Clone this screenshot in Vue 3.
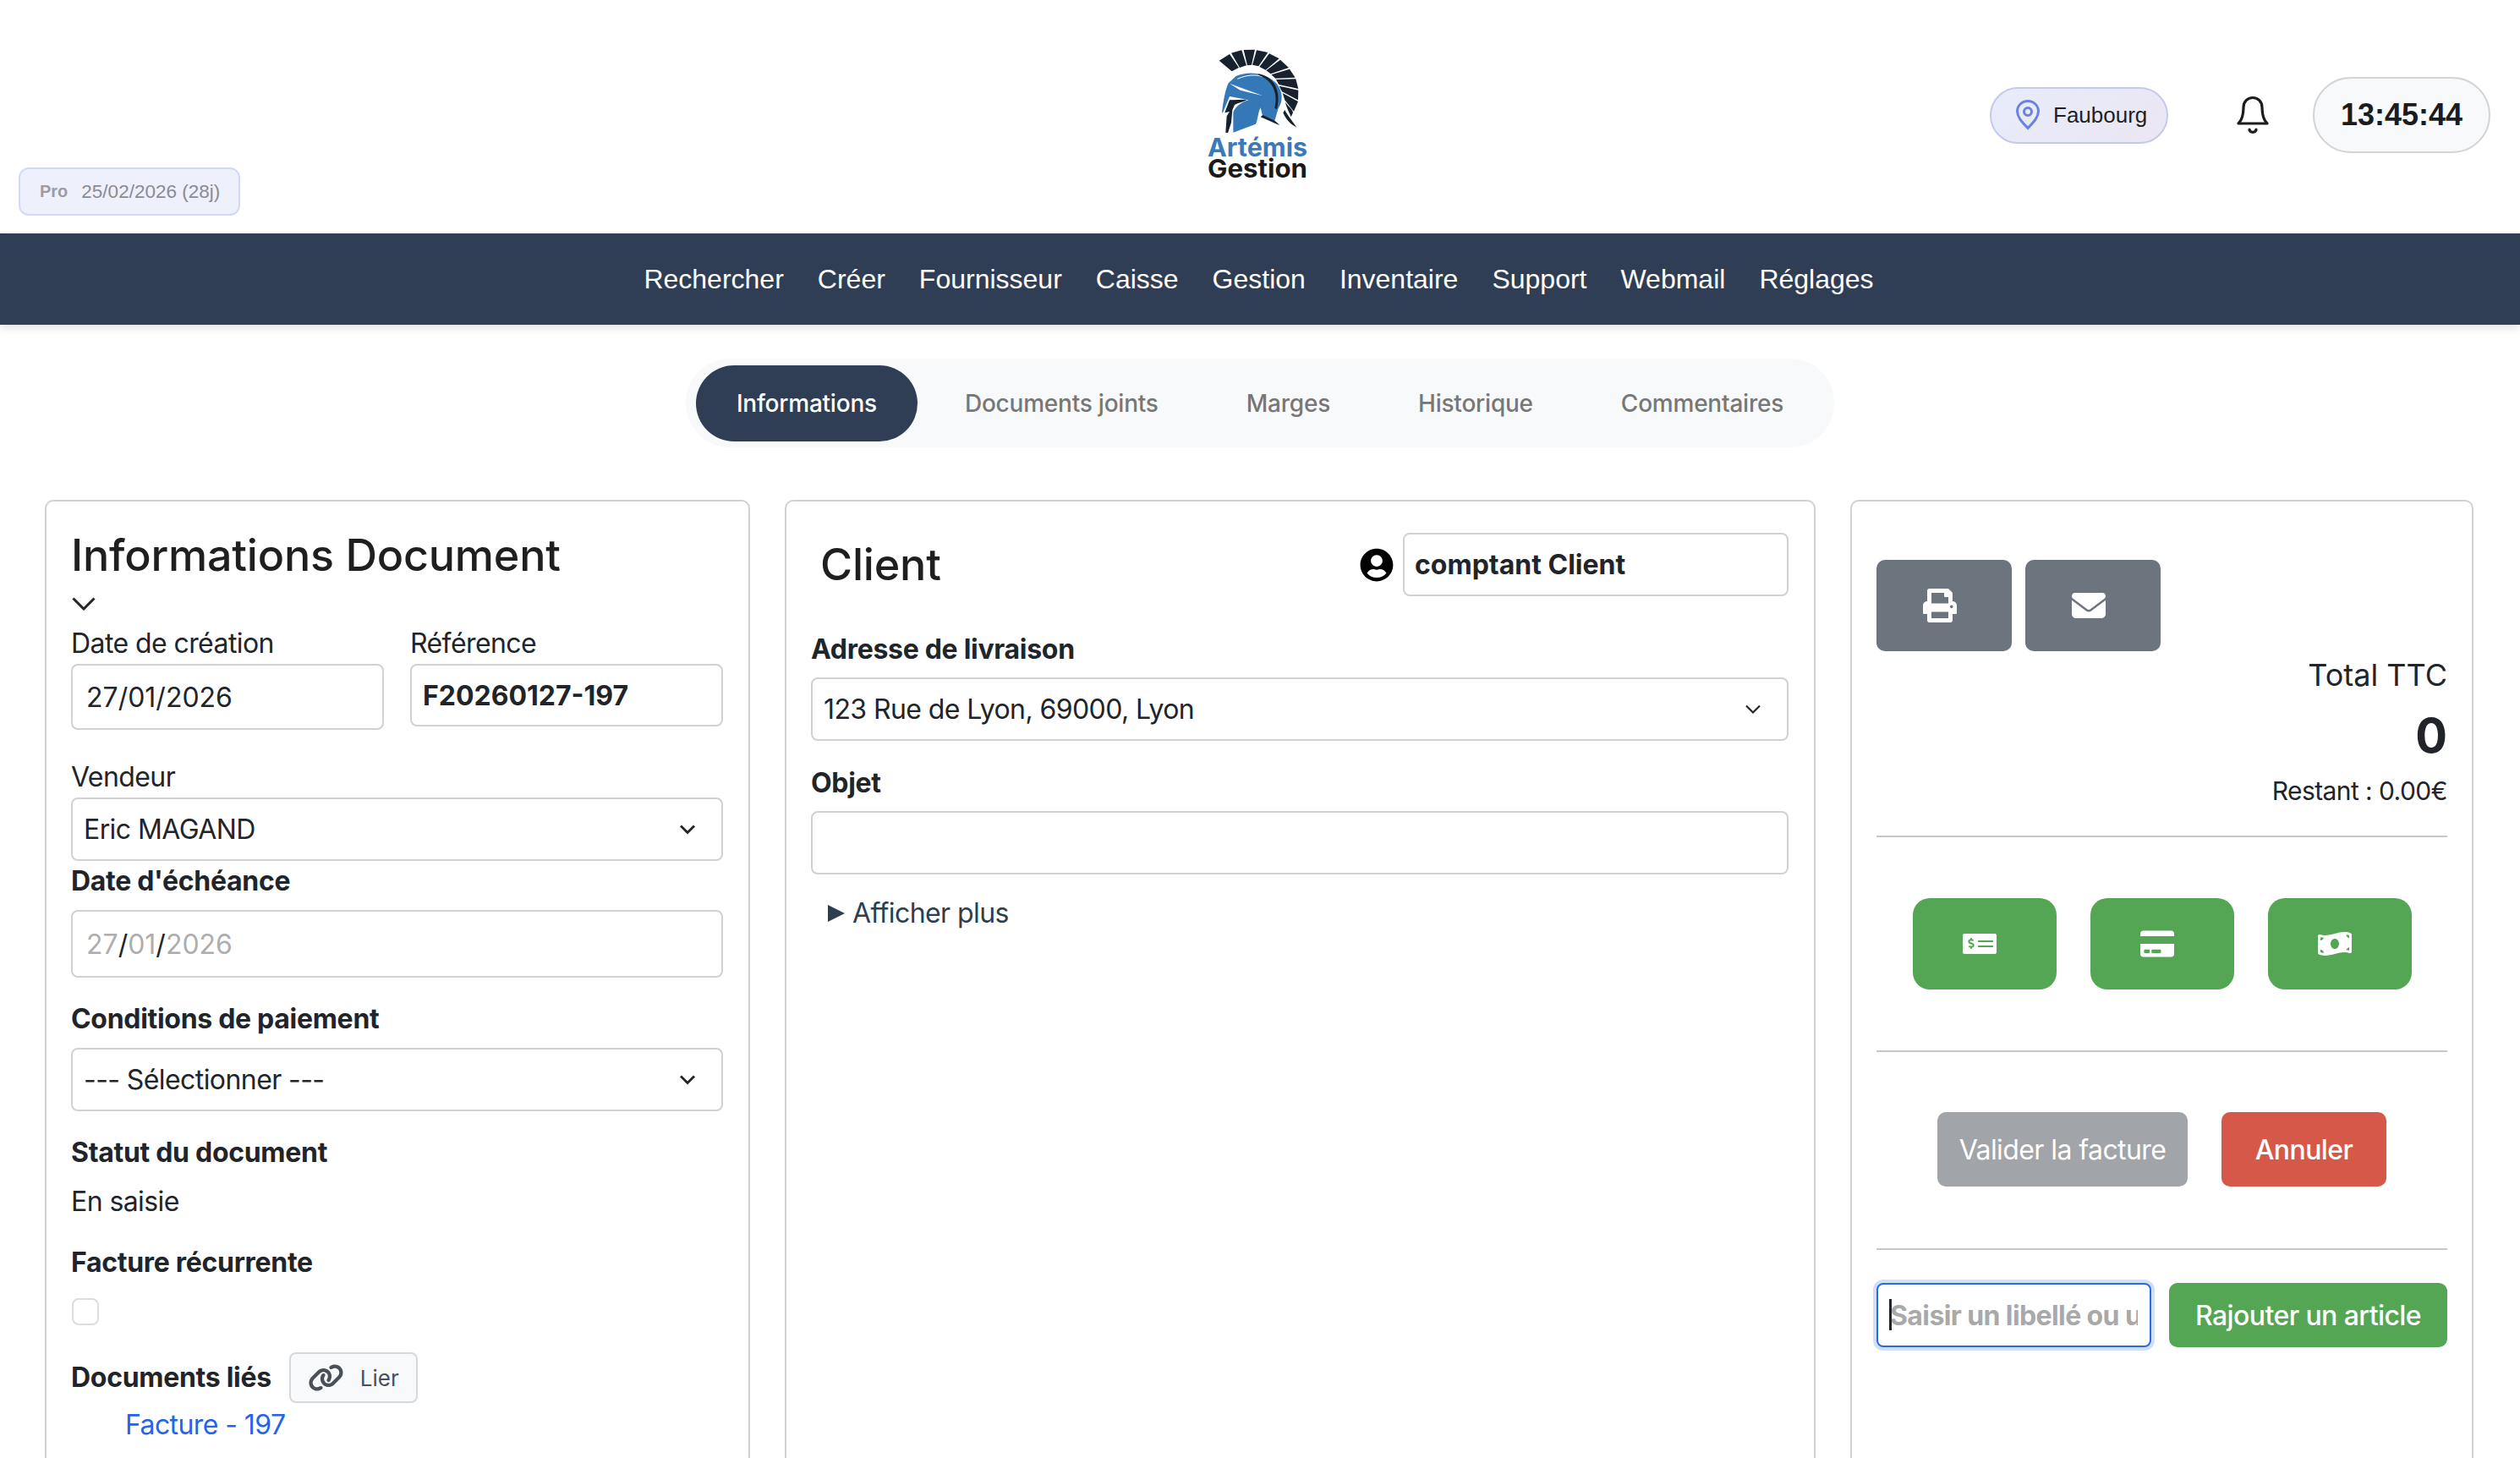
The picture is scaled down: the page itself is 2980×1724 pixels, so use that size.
<template>
  <div class="page">
    <header class="top">
      <div class="plan"><span class="plan-name">Pro</span><span class="plan-date">25/02/2026 (28j)</span></div>
      <div class="logo">
        <svg class="logo-img" viewBox="0 0 120 166">
          <g transform="translate(2 -6) scale(.3333)">
            <g fill="#18222e">
              <path d="M35 65 72 42 105 90 80 103z" />
              <path d="M78 38 115 28 132 82 108 90z" />
              <path d="M122 27 162 26 150 80 135 82z" />
              <path d="M168 28 208 36 175 85 153 80z" />
              <path d="M213 40 248 58 200 98 178 87z" />
              <path d="M252 62 282 90 218 112 202 100z" />
              <path d="M285 95 305 125 235 128 220 115z" />
              <path d="M307 130 316 165 247 150 237 132z" />
              <path d="M316 170 315 205 258 175 248 155z" />
              <path d="M315 210 300 245 268 205 260 180z" />
              <path d="M270 212C285 232 296 240 297 250L290 265C283 245 275 235 270 212z" />
              <path d="M268 240C275 255 295 280 310 302C285 290 270 270 262 250z" />
            </g>
            <path fill="#3478b8" d="M68 145 95 120C140 100 205 108 240 148C262 178 262 210 245 235L232 278 250 292 190 265 182 232C172 250 172 280 165 290L85 320 85 248C95 225 120 210 140 205L72 192 48 250 45 250C50 210 55 175 68 145z" />
            <path fill="#fff" d="M72 146 190 190 110 170z" />
            <path fill="none" stroke="#fff" stroke-width="3" d="M100 130C130 116 165 113 190 122" />
            <path fill="#18222e" d="M175 112C225 122 258 165 240 238L232 234C245 180 225 135 175 116z" />
            <path fill="#18222e" d="M72 205 135 203C120 212 100 215 90 222L82 240 78 285 66 322 58 320 62 262 72 246 55 250z" />
            <path fill="#18222e" d="M182 265 250 295 232 278 190 258z" />
          </g>
          <text class="logo-txt" x="0" y="129" fill="#3a7ab8" textLength="118" lengthAdjust="spacingAndGlyphs">Artémis</text>
          <text class="logo-txt" x="0" y="154" fill="#1a1a1a" textLength="118" lengthAdjust="spacingAndGlyphs">Gestion</text>
        </svg>
      </div>
      <div class="top-right">
        <div class="site">
          <svg class="pin" viewBox="0 0 30 36" fill="none" stroke="#6b82e0" stroke-width="3">
            <path d="M15 33.5C9 27 2.5 21 2.5 13.5a12.5 12 0 0 1 25 0C27.5 21 21 27 15 33.5z" />
            <circle cx="15" cy="14" r="4.5" />
          </svg>
          <span>Faubourg</span>
        </div>
        <svg class="bell" viewBox="0 0 40 46" fill="none" stroke="#1c1c1c" stroke-width="3.2" stroke-linejoin="round" stroke-linecap="round">
          <path d="M3 33C8 28 9 22 9 14C9 7 14 2.5 20 2.5C26 2.5 31 7 31 14C31 22 32 28 37 33z" />
          <path d="M16 40C16 44.5 24 44.5 24 40" />
        </svg>
        <div class="clock">13:45:44</div>
      </div>
    </header>

    <nav class="menu">
      <a v-for="item in menu" :key="item">{{ item }}</a>
    </nav>

    <div class="tabs-wrap">
      <div class="tabs">
        <div v-for="(tab, i) in tabs" :key="tab" class="tab" :class="{ active: i === 0 }">{{ tab }}</div>
      </div>
    </div>

    <main class="cols">
      <section class="card doc">
        <h2 class="doc-title">Informations Document</h2>
        <div class="collapse">
          <svg class="chev-big" viewBox="0 0 28 16" fill="none" stroke="#212529" stroke-width="3">
            <path d="M1.5 1.5 14 14 26.5 1.5" />
          </svg>
        </div>
        <div class="pair">
          <div class="pair-col">
            <div class="lab">Date de création</div>
            <div class="box date-box">27/01/2026</div>
          </div>
          <div class="pair-col">
            <div class="lab">Référence</div>
            <div class="box ref-box">F20260127-197</div>
          </div>
        </div>
        <div class="lab vendeur-lab">Vendeur</div>
        <div class="box sel">
          <span>Eric MAGAND</span>
          <svg class="chev" viewBox="0 0 20 14" fill="none" stroke="#212529" stroke-width="2.8"><path d="M2 2.5 10 10.5 18 2.5" /></svg>
        </div>
        <div class="lab strong">Date d'échéance</div>
        <div class="box due-box">
          <span class="muted">27</span>/<span class="muted">01</span>/<span class="muted">2026</span>
        </div>
        <div class="lab strong pay-lab">Conditions de paiement</div>
        <div class="box sel">
          <span>--- Sélectionner ---</span>
          <svg class="chev" viewBox="0 0 20 14" fill="none" stroke="#212529" stroke-width="2.8"><path d="M2 2.5 10 10.5 18 2.5" /></svg>
        </div>
        <div class="lab strong status-lab">Statut du document</div>
        <div class="lab status-val">En saisie</div>
        <div class="lab strong recur-lab">Facture récurrente</div>
        <div class="check"></div>
        <div class="linked">
          <span class="lab strong">Documents liés</span>
          <div class="link-btn">
            <svg class="link-ico" viewBox="0 0 640 512" fill="#4a5058">
              <path d="M579.8 267.7c56.5-56.5 56.5-148 0-204.5c-50-50-128.8-56.5-186.3-15.4l-1.6 1.1c-14.4 10.3-17.7 30.3-7.4 44.6s30.3 17.7 44.6 7.4l1.6-1.1c32.1-22.9 76-19.3 103.8 8.6c31.5 31.5 31.5 82.5 0 114L422.3 334.8c-31.5 31.5-82.5 31.5-114 0c-27.9-27.9-31.5-71.8-8.6-103.8l1.1-1.6c10.3-14.4 6.9-34.4-7.4-44.6s-34.4-6.9-44.6 7.4l-1.1 1.6C206.5 251.2 213 330 263 380c56.5 56.5 148 56.5 204.5 0L579.8 267.7zM60.2 244.3c-56.5 56.5-56.5 148 0 204.5c50 50 128.8 56.5 186.3 15.4l1.6-1.1c14.4-10.3 17.7-30.3 7.4-44.6s-30.3-17.7-44.6-7.4l-1.6 1.1c-32.1 22.9-76 19.3-103.8-8.6C74 372 74 321 105.5 289.5L217.7 177.2c31.5-31.5 82.5-31.5 114 0c27.9 27.9 31.5 71.8 8.6 103.9l-1.1 1.6c-10.3 14.4-6.9 34.4 7.4 44.6s34.4 6.9 44.6-7.4l1.1-1.6C433.5 260.8 427 182 377 132c-56.5-56.5-148-56.5-204.5 0L60.2 244.3z" />
            </svg>
            <span>Lier</span>
          </div>
        </div>
        <a class="doc-link">Facture - 197</a>
      </section>

      <section class="card client">
        <div class="client-head">
          <h2 class="client-title">Client</h2>
          <div class="client-pick">
            <svg class="user-ico" viewBox="0 0 496 512" fill="#000">
              <path d="M248 8C111 8 0 119 0 256s111 248 248 248 248-111 248-248S385 8 248 8zm0 96c48.6 0 88 39.4 88 88s-39.4 88-88 88-88-39.4-88-88 39.4-88 88-88zm0 344c-58.7 0-111.3-26.6-146.5-68.2 18.8-35.4 55.6-59.8 98.5-59.8 2.4 0 4.8.4 7.1 1.1 13 4.2 26.6 6.9 40.9 6.9 14.3 0 28-2.7 40.9-6.9 2.3-.7 4.7-1.1 7.1-1.1 42.9 0 79.7 24.4 98.5 59.8C359.3 421.4 306.7 448 248 448z" />
            </svg>
            <div class="box client-box">comptant Client</div>
          </div>
        </div>
        <div class="lab strong addr-lab">Adresse de livraison</div>
        <div class="box sel addr-sel">
          <span>123 Rue de Lyon, 69000, Lyon</span>
          <svg class="chev" viewBox="0 0 20 14" fill="none" stroke="#212529" stroke-width="2.2"><path d="M2 2.5 10 10.5 18 2.5" /></svg>
        </div>
        <div class="lab strong obj-lab">Objet</div>
        <div class="box obj-box"></div>
        <div class="more"><span class="tri"></span>Afficher plus</div>
      </section>

      <section class="card pay">
        <div class="tools">
          <div class="tool">
            <svg class="ico" viewBox="0 0 512 512" fill="#fff">
              <path d="M448 192V77.25c0-8.49-3.37-16.62-9.37-22.63L393.37 9.37c-6-6-14.14-9.37-22.63-9.37H96C78.33 0 64 14.33 64 32v160c-35.35 0-64 28.65-64 64v112c0 8.84 7.16 16 16 16h48v96c0 17.67 14.33 32 32 32h320c17.67 0 32-14.33 32-32v-96h48c8.84 0 16-7.16 16-16V256c0-35.35-28.65-64-64-64zm-64 256H128v-96h256v96zm0-224H128V64h192v48c0 8.84 7.16 16 16 16h48v96zm48 72c-13.25 0-24-10.75-24-24 0-13.26 10.75-24 24-24s24 10.74 24 24c0 13.25-10.75 24-24 24z" />
            </svg>
          </div>
          <div class="tool">
            <svg class="ico" viewBox="0 0 512 512" fill="#fff">
              <path d="M48 64C21.5 64 0 85.5 0 112c0 15.1 7.1 29.3 19.2 38.4L236.8 313.6c11.4 8.5 27 8.5 38.4 0L492.8 150.4c12.1-9.1 19.2-23.3 19.2-38.4c0-26.5-21.5-48-48-48H48zM0 176V384c0 35.3 28.7 64 64 64H448c35.3 0 64-28.7 64-64V176L294.4 339.2c-22.8 17.1-54 17.1-76.8 0L0 176z" />
            </svg>
          </div>
        </div>
        <div class="total-lab">Total TTC</div>
        <div class="total-val">0</div>
        <div class="total-rest">Restant : 0.00€</div>
        <hr class="sep" />
        <div class="modes">
          <div class="mode">
            <svg class="ico" viewBox="0 0 640 512" fill="#fff">
              <path d="M608 64H32C14.33 64 0 78.33 0 96v320c0 17.67 14.33 32 32 32h576c17.67 0 32-14.33 32-32V96c0-17.67-14.33-32-32-32zM176 327.88V344c0 4.42-3.58 8-8 8h-16c-4.42 0-8-3.58-8-8v-16.29c-11.29-.58-22.27-4.52-31.37-11.35-3.9-2.93-4.1-8.77-.57-12.14l11.75-11.21c2.77-2.64 6.89-2.76 10.13-.73 3.87 2.42 8.26 3.72 12.82 3.72h28.11c6.5 0 11.8-5.92 11.8-13.19 0-5.95-3.61-11.19-8.77-12.73l-45-13.5c-18.59-5.58-31.58-23.42-31.58-43.39 0-24.52 19.05-44.44 42.67-45.07V152c0-4.42 3.58-8 8-8h16c4.42 0 8 3.58 8 8v16.29c11.29.58 22.27 4.51 31.37 11.35 3.9 2.93 4.1 8.77.57 12.14l-11.75 11.21c-2.77 2.64-6.89 2.76-10.13.73-3.87-2.43-8.26-3.72-12.82-3.72h-28.11c-6.5 0-11.8 5.92-11.8 13.19 0 5.95 3.61 11.19 8.77 12.73l45 13.5c18.59 5.58 31.58 23.42 31.58 43.39 0 24.53-19.05 44.44-42.67 45.07zM576 312c0 4.42-3.58 8-8 8H296c-4.42 0-8-3.58-8-8v-16c0-4.42 3.58-8 8-8h272c4.42 0 8 3.58 8 8v16zm0-96c0 4.42-3.58 8-8 8H296c-4.42 0-8-3.58-8-8v-16c0-4.42 3.58-8 8-8h272c4.42 0 8 3.58 8 8v16z" />
            </svg>
          </div>
          <div class="mode">
            <svg class="ico" viewBox="0 0 576 512" fill="#fff">
              <path d="M0 432c0 26.5 21.5 48 48 48h480c26.5 0 48-21.5 48-48V256H0v176zm192-68c0-6.6 5.4-12 12-12h136c6.6 0 12 5.4 12 12v40c0 6.6-5.4 12-12 12H204c-6.6 0-12-5.4-12-12v-40zm-128 0c0-6.6 5.4-12 12-12h72c6.6 0 12 5.4 12 12v40c0 6.6-5.4 12-12 12H76c-6.6 0-12-5.4-12-12v-40zM576 80v48H0V80c0-26.5 21.5-48 48-48h480c26.5 0 48 21.5 48 48z" />
            </svg>
          </div>
          <div class="mode">
            <svg class="ico" viewBox="0 0 640 512" fill="#fff">
              <path d="M621.16 54.46C582.37 38.19 543.55 32 504.75 32c-123.17-.01-246.33 62.34-369.5 62.34-30.89 0-61.76-3.92-92.65-13.72-3.47-1.1-6.95-1.62-10.35-1.62C15.04 79 0 92.32 0 110.81v317.26c0 12.63 7.23 24.6 18.84 29.46C57.63 473.81 96.45 480 135.25 480c123.17 0 246.34-62.35 369.51-62.35 30.89 0 61.76 3.92 92.65 13.72 3.47 1.1 6.95 1.62 10.35 1.62 17.21 0 32.25-13.32 32.25-31.81V83.93c-.01-12.64-7.24-24.6-18.85-29.47zM48 132.22c20.12 5.04 41.12 7.57 62.72 8.93C104.84 170.54 79 192.69 48 192.69v-60.47zm0 285v-47.78c34.37 0 62.18 27.27 63.71 61.4-22.53-1.81-43.59-6.31-63.71-13.62zM320 352c-44.19 0-80-42.99-80-96 0-53.02 35.82-96 80-96s80 42.98 80 96c0 53.03-35.83 96-80 96zm272 27.78c-17.52-4.39-35.71-6.85-54.32-8.44 5.87-26.08 27.5-45.88 54.32-49.28v57.72zm0-236.11c-30.89-3.91-54.86-29.7-55.81-61.55 19.54 2.17 38.09 6.23 55.81 12.66v48.89z" />
            </svg>
          </div>
        </div>
        <hr class="sep" />
        <div class="actions">
          <button class="act valid">Valider la facture</button>
          <button class="act cancel">Annuler</button>
        </div>
        <hr class="sep" />
        <div class="add-row">
          <div class="add-field">
            <input class="add-input" placeholder="Saisir un libellé ou un article" />
            <span class="caret"></span>
          </div>
          <button class="add-btn">Rajouter un article</button>
        </div>
      </section>
    </main>
  </div>
</template>

<script setup>
const menu = ['Rechercher', 'Créer', 'Fournisseur', 'Caisse', 'Gestion', 'Inventaire', 'Support', 'Webmail', 'Réglages']
const tabs = ['Informations', 'Documents joints', 'Marges', 'Historique', 'Commentaires']
</script>

<style>
html, body { margin: 0; background: #fff; }
</style>

<style scoped>
.page {
  height: 1724px;
  overflow: hidden;
  font-family: Inter, "Liberation Sans", sans-serif;
  font-size: 32px;
  letter-spacing: -0.58px;
  color: #212529;
  background: #fff;
}

/* header */
.top {
  height: 276px;
  display: grid;
  grid-template-columns: 1fr auto 1fr;
}
.plan {
  align-self: end;
  justify-self: start;
  margin: 0 0 21px 22px;
  height: 57px;
  width: 262px;
  box-sizing: border-box;
  display: flex;
  align-items: center;
  gap: 16px;
  padding-left: 23px;
  background: #eef0fb;
  border: 2px solid #d3d9f5;
  border-radius: 12px;
  color: #8b8b93;
  font-family: "Liberation Sans", sans-serif;
  font-size: 22.5px;
  letter-spacing: 0;
}
.plan-name { font-weight: 700; font-size: 20px; color: #9c9ca8; }
.logo { padding-top: 56px; margin-right: 4px; }
.logo-img { display: block; width: 120px; height: 166px; }
.logo-txt { font-weight: 700; font-size: 30px; letter-spacing: 0; }
.top-right {
  display: flex;
  align-items: center;
  justify-content: flex-end;
  padding: 0 35px 4px 0;
}
.site {
  width: 211px;
  height: 67px;
  box-sizing: border-box;
  display: flex;
  align-items: center;
  gap: 15px;
  padding-left: 28px;
  border: 2px solid #c3c9f0;
  border-radius: 34px;
  background: linear-gradient(135deg, #e8ecfb, #ebe6f2);
  font-family: "Liberation Sans", sans-serif;
  font-size: 26px;
  letter-spacing: 0;
  color: #1f1f1f;
}
.pin { width: 30px; height: 36px; }
.bell { width: 40px; height: 46px; margin: 0 51px 0 80px; }
.clock {
  width: 210px;
  height: 90px;
  box-sizing: border-box;
  display: flex;
  align-items: center;
  justify-content: center;
  border: 2px solid #d5d5d5;
  border-radius: 45px;
  background: #f8f9fb;
  font-family: "Liberation Sans", sans-serif;
  font-weight: 700;
  font-size: 36px;
  letter-spacing: 0;
  color: #1c1c1c;
}

/* menu */
.menu {
  height: 108px;
  display: flex;
  align-items: center;
  justify-content: center;
  gap: 40px;
  padding-right: 3px;
  background: #2f3e54;
  box-shadow: 0 4px 10px rgba(0, 0, 0, 0.12);
  color: #fff;
  font-family: "Liberation Sans", sans-serif;
  font-size: 32px;
  letter-spacing: 0;
}

/* tabs */
.tabs-wrap {
  display: flex;
  justify-content: center;
  padding: 40px 0 0;
  height: 207px;
  box-sizing: border-box;
}
.tabs {
  height: 105px;
  box-sizing: border-box;
  display: flex;
  gap: 8px;
  padding: 8px 12px;
  border-radius: 52px;
  background: #f8f9fa;
  font-weight: 500;
  font-size: 28px;
  letter-spacing: -0.22px;
  color: #777;
}
.tab {
  height: 90px;
  display: flex;
  align-items: center;
  padding: 0 48px;
  border-radius: 45px;
}
.tab.active { background: #2f3e54; color: #fff; }

/* columns */
.cols {
  display: grid;
  grid-template-columns: 834px 1219px 737px;
  gap: 41px;
  padding-left: 53px;
}
.card {
  height: 1400px;
  box-sizing: border-box;
  border: 2px solid #d0d1d3;
  border-radius: 10px;
  padding: 30px 30px 30px 29px;
}
.lab { height: 48px; line-height: 48px; }
.strong { font-weight: 700; letter-spacing: -0.3px; }
.box {
  box-sizing: border-box;
  border: 2px solid #d0d1d3;
  border-radius: 8px;
  background: #fff;
  display: flex;
  align-items: center;
}

.doc-title { margin: 0; font-weight: 500; font-size: 52px; line-height: 68px; letter-spacing: -0.2px; color: #1f1f1f; }
.collapse { height: 46px; display: flex; align-items: center; }
.chev-big { width: 28px; height: 16px; margin-left: 1px; }
.pair { display: flex; gap: 31px; align-items: flex-start; margin-bottom: 32px; }
.pair-col { width: 370px; }
.date-box { height: 78px; padding-left: 16px; letter-spacing: 0; }
.ref-box { height: 74px; padding-left: 13px; font-weight: 700; letter-spacing: 0; }
.sel { height: 75px; padding: 0 30px 0 13px; justify-content: space-between; }
.chev { width: 20px; height: 14px; }
.due-box { height: 80px; padding-left: 16px; margin-top: 10px; letter-spacing: 0; }
.muted { color: #aeaeae; }
.pay-lab { margin-top: 25px; margin-bottom: 10px; }
.status-lab { margin-top: 25px; }
.status-val { margin-top: 10px; }
.recur-lab { margin-top: 24px; }
.check {
  width: 32px;
  height: 32px;
  box-sizing: border-box;
  margin: 18px 0 0 1px;
  border: 2px solid #dcdde0;
  border-radius: 8px;
}
.linked { display: flex; align-items: center; gap: 21px; margin-top: 32px; }
.link-btn {
  width: 152px;
  height: 60px;
  box-sizing: border-box;
  display: flex;
  align-items: center;
  gap: 19px;
  padding-left: 20px;
  border: 2px solid #d7d8da;
  border-radius: 8px;
  background: #f8f9fa;
  font-size: 26px;
  letter-spacing: 0;
  color: #4a5058;
}
.link-ico { width: 43px; height: 34px; }
.doc-link { display: block; margin: 2px 0 0 64px; line-height: 48px; color: #2563eb; }

.client-head { display: flex; justify-content: space-between; align-items: center; margin-bottom: 39px; }
.client-title { margin: 7px 0 0 11px; font-weight: 500; font-size: 52px; line-height: 68px; letter-spacing: -0.2px; color: #1f1f1f; }
.client-pick { display: flex; align-items: center; gap: 11px; margin-top: 7px; }
.user-ico { width: 40px; height: 40px; }
.client-box { width: 456px; height: 75px; padding-left: 12px; font-weight: 700; letter-spacing: 0; }
.addr-lab { margin-bottom: 9px; }
.addr-sel { padding-right: 30px; }
.obj-lab { margin-top: 26px; margin-bottom: 9px; }
.obj-box { height: 75px; }
.more { display: flex; align-items: center; margin: 22px 0 0 20px; line-height: 48px; color: #2c3e50; }
.tri {
  width: 0;
  height: 0;
  margin-right: 9px;
  border-left: 20px solid #2c3e50;
  border-top: 10px solid transparent;
  border-bottom: 10px solid transparent;
}

.pay { padding-right: 29px; }
.tools { display: flex; gap: 16px; margin-top: 39px; }
.tool {
  width: 160px;
  height: 108px;
  display: flex;
  align-items: center;
  padding-left: 55px;
  box-sizing: border-box;
  border-radius: 10px;
  background: #6c757d;
}
.ico { width: 40px; height: 40px; }
.total-lab { text-align: right; font-size: 36px; line-height: 56px; letter-spacing: 0; }
.total-val { text-align: right; font-size: 56px; font-weight: 700; line-height: 72px; letter-spacing: 0; margin-top: 8px; }
.total-rest { text-align: right; font-size: 30px; line-height: 46px; margin-top: 6px; }
.sep { margin: 0; border: 0; border-top: 2px solid #c6c7c9; }
.total-rest + .sep { margin-top: 30px; }
.modes { display: flex; justify-content: center; gap: 40px; padding: 72px 0; }
.mode {
  width: 170px;
  height: 108px;
  display: flex;
  align-items: center;
  justify-content: center;
  border-radius: 20px;
  background: #54a655;
}
.mode .ico { margin-left: -12px; }
.actions { display: flex; justify-content: center; gap: 40px; padding: 71px 0 73px; }
.act {
  height: 88px;
  border: 0;
  border-radius: 10px;
  color: #fff;
  font-family: inherit;
  font-weight: 500;
  font-size: 32px;
  letter-spacing: -0.58px;
}
.valid { width: 296px; background: #a1a4a8; font-weight: 400; }
.cancel { width: 195px; background: #d65848; }
.add-row { display: flex; justify-content: space-between; margin-top: 39px; }
.add-field { position: relative; }
.add-input {
  display: block;
  width: 325px;
  height: 76px;
  box-sizing: border-box;
  padding: 0 14px;
  border: 2px solid #2b6be0;
  border-radius: 8px;
  box-shadow: 0 0 0 4px #d0e0fc;
  outline: none;
  font-family: inherit;
  font-weight: 700;
  font-size: 32px;
  letter-spacing: -0.6px;
}
.add-input::placeholder { color: #a9a9a9; opacity: 1; }
.caret {
  position: absolute;
  left: 15px;
  top: 19px;
  width: 3px;
  height: 37px;
  background: #212529;
}
.add-btn {
  width: 329px;
  height: 76px;
  border: 0;
  border-radius: 10px;
  background: #54a655;
  color: #fff;
  font-family: inherit;
  font-weight: 500;
  font-size: 32px;
  letter-spacing: -0.58px;
}
</style>
